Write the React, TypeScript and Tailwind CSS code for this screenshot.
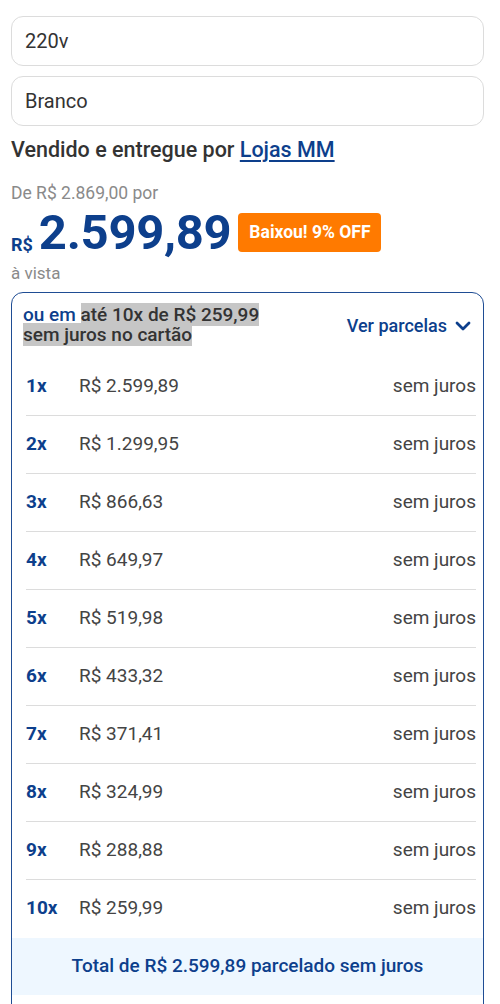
import React from "react";

const rows = [
  ["1x", "R$ 2.599,89"],
  ["2x", "R$ 1.299,95"],
  ["3x", "R$ 866,63"],
  ["4x", "R$ 649,97"],
  ["5x", "R$ 519,98"],
  ["6x", "R$ 433,32"],
  ["7x", "R$ 371,41"],
  ["8x", "R$ 324,99"],
  ["9x", "R$ 288,88"],
  ["10x", "R$ 259,99"],
];

export default function App() {
  return (
    <div className="bg-white w-[500px] h-[1004px] overflow-hidden" style={{ fontFamily: "Roboto, 'Liberation Sans', sans-serif" }}>
      <div className="ml-[11px] w-[473px] pt-[16px]">
        <div className="h-[50px] border border-[#dcdcdc] rounded-[12px] flex items-center px-[13px] text-[20px] text-[#333]">220v</div>
        <div className="mt-[10px] h-[50px] border border-[#dcdcdc] rounded-[12px] flex items-center px-[13px] text-[20px] text-[#333]">Branco</div>
        <div className="mt-[10px] text-[21.5px] font-medium text-[#333] leading-[28px]">
          Vendido e entregue por <span className="text-[#0d3f8c] underline underline-offset-[3px]">Lojas MM</span>
        </div>
        <div className="mt-[19px] text-[17.5px] text-[#8a8a8a] leading-[20px]">De R$ 2.869,00 por</div>
        <div className="flex items-center mt-[5px] h-[49px]">
          <span className="text-[18px] font-bold text-[#0d3f8c] self-end mb-[3px] mr-[6px] leading-none">R$</span>
          <span className="text-[49px] font-bold text-[#0d3f8c] leading-none tracking-[-0.3px]">2.599,89</span>
          <span className="ml-[7px] bg-[#ff7a00] text-white font-bold text-[17.5px] rounded-[4px] h-[39px] w-[143px] flex items-center justify-center">Baixou! 9% OFF</span>
        </div>
        <div className="mt-[6px] text-[17px] text-[#8a8a8a] leading-[20px]">à vista</div>
        <div className="mt-[9px] border-[1.5px] border-[#1f4d94] rounded-[12px] h-[800px] overflow-hidden">
          <div className="flex items-start justify-between pl-[11px] pr-[12px] pt-[12px] h-[64.5px]">
            <div className="text-[19px] font-medium leading-[20px] text-[#333]">
              <span className="text-[#0d3f8c]">ou em </span>
              <span className="bg-[#c6c6c6]">até 10x de R$ 259,99</span>
              <br />
              <span className="bg-[#c6c6c6]">sem juros no cartão</span>
            </div>
            <div className="flex items-center gap-[8px] text-[18px] font-medium text-[#0d3f8c] mt-[7px]">
              Ver parcelas
              <svg width="16" height="12" viewBox="0 0 16 12" fill="none">
                <path d="M2 3l6 6 6-6" stroke="#0d3f8c" strokeWidth="2.8" strokeLinecap="round" strokeLinejoin="round" />
              </svg>
            </div>
          </div>
          <div className="pl-[14px] pr-[7px]">
            {rows.map(([n, v], i) => (
              <div key={n} className={`flex items-center h-[58px] ${i < rows.length - 1 ? "border-b border-[#dcdcdc]" : ""}`}>
                <span className="w-[53px] text-[19px] font-bold text-[#0d3f8c]">{n}</span>
                <span className="flex-1 text-[19px] text-[#444]">{v}</span>
                <span className="text-[19px] text-[#444]">sem juros</span>
              </div>
            ))}
          </div>
          <div className="bg-[#eef7ff] h-[57px] flex items-center justify-center text-[19px] font-medium text-[#0d3f8c]">
            Total de R$ 2.599,89 parcelado sem juros
          </div>
        </div>
      </div>
    </div>
  );
}
